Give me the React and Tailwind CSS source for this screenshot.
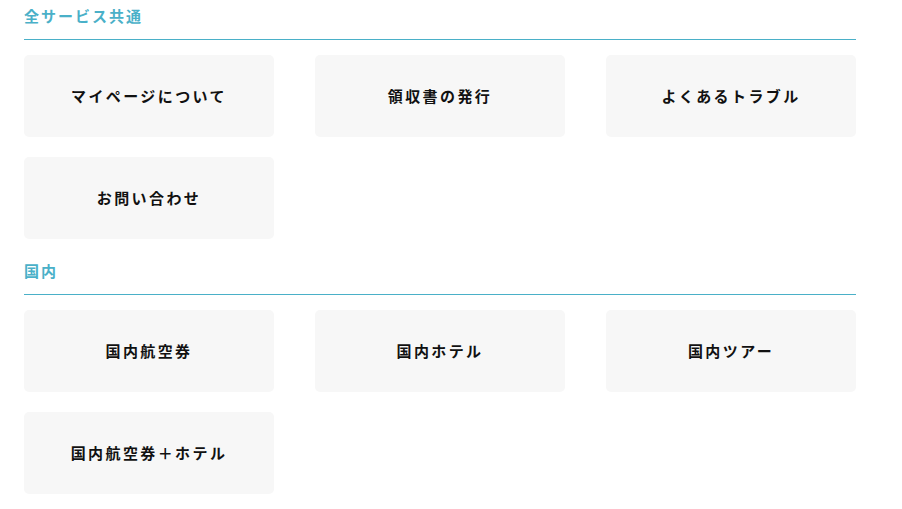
import React from 'react';

const sections = [
  {
    title: '全サービス共通',
    items: ['マイページについて', '領収書の発行', 'よくあるトラブル', 'お問い合わせ'],
  },
  {
    title: '国内',
    items: ['国内航空券', '国内ホテル', '国内ツアー', '国内航空券＋ホテル'],
  },
];

export default function App() {
  return (
    <div
      className="w-[902px] h-[509px] bg-white px-6 overflow-hidden"
      style={{ fontFamily: '"Noto Sans CJK JP", "Noto Sans", sans-serif' }}
    >
      <div className="w-[832px]">
        {sections.map((s) => (
          <section key={s.title}>
            <h2 className="pt-[5px] pb-[13px] text-[15px] leading-[21px] font-bold tracking-[2px] text-[#4ab0c8]">
              {s.title}
            </h2>
            <div className="h-px bg-[#4ab0c8]" />
            <ul className="grid grid-cols-3 gap-x-[41px] gap-y-[20px] pt-[15px] pb-[16px]">
              {s.items.map((item) => (
                <li
                  key={item}
                  className="h-[82px] rounded-[5px] bg-[#f7f7f7] flex items-center justify-center text-[15px] font-bold tracking-[2.4px] text-[#111]"
                >
                  {item}
                </li>
              ))}
            </ul>
          </section>
        ))}
      </div>
    </div>
  );
}
